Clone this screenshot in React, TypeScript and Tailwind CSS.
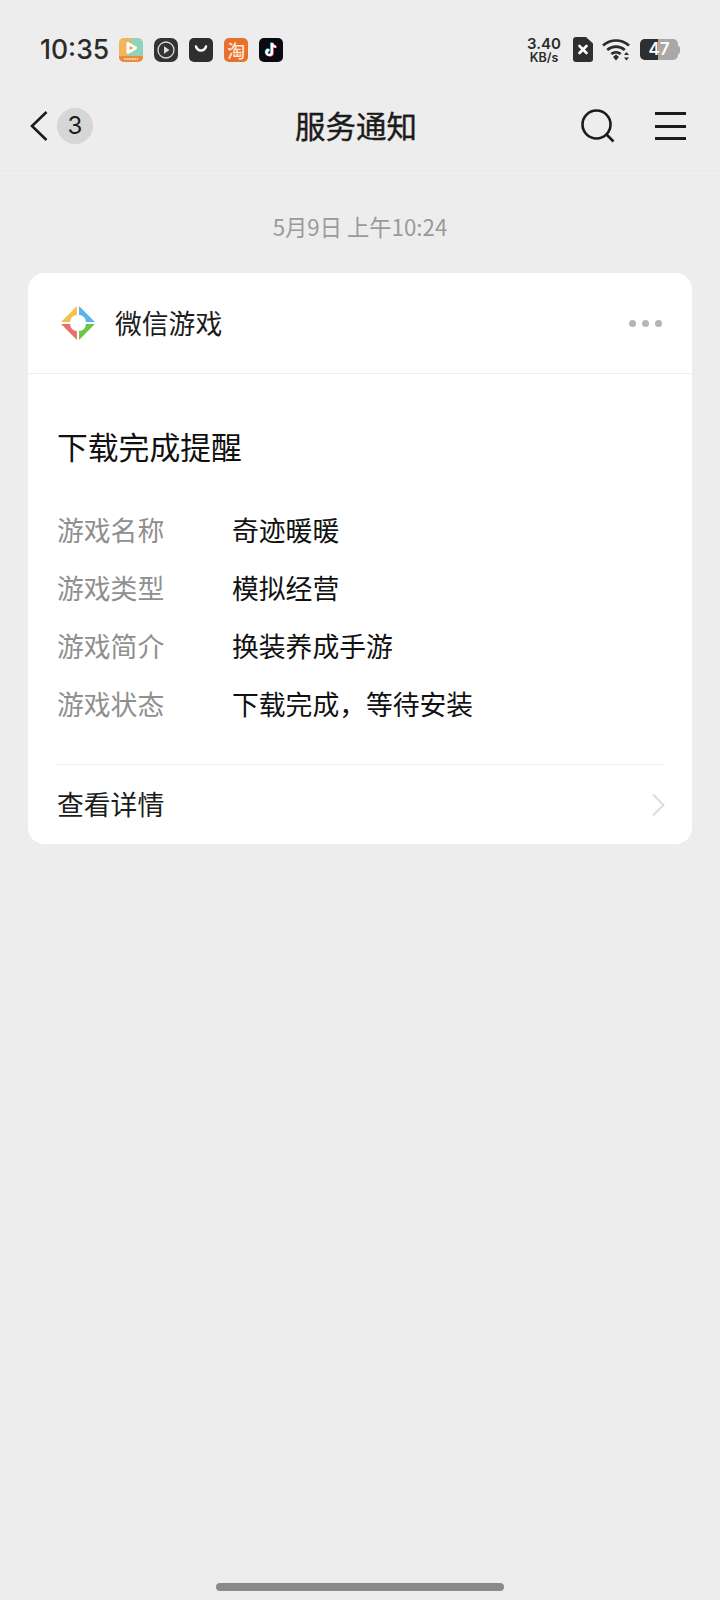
const cjk = "font-['Noto_Sans_CJK_SC','Noto_Sans',sans-serif]";

const rows = [
  ['游戏名称', '奇迹暖暖'],
  ['游戏类型', '模拟经营'],
  ['游戏简介', '换装养成手游'],
  ['游戏状态', '下载完成，等待安装'],
];

function AppIcons() {
  return (
    <div className="flex items-center gap-[11px]">
      <svg width="24" height="24" viewBox="0 0 24 24">
        <rect width="24" height="24" rx="5" fill="#8fd4b8" />
        <path d="M0 5a5 5 0 0 1 5-5h8L8 18H0z" fill="#f2b45c" />
        <path d="M0 18h24v1a5 5 0 0 1-5 5H5a5 5 0 0 1-5-5z" fill="#ee8a3c" />
        <path d="M7.500 5.500c0-1.200 1.200-1.900 2.300-1.200l7.500 4.500c1 .6 1 1.800 0 2.400l-7.500 4.500c-1.100.7-2.300 0-2.300-1.200z" fill="#fff" />
        <path d="M10.500 7.800l4.200 2.200-4.200 2.200z" fill="#f2a35c" />
        <path d="M5 21h14" stroke="#ffe2c4" strokeWidth="1.500" strokeDasharray="2 .6" />
      </svg>
      <svg width="24" height="24" viewBox="0 0 24 24">
        <rect width="24" height="24" rx="7" fill="#333" />
        <circle cx="12" cy="12" r="8" fill="none" stroke="#ddd" strokeWidth="1.300" />
        <path d="M10 8.300l5.500 3.700-5.500 3.700z" fill="#ddd" />
      </svg>
      <svg width="24" height="24" viewBox="0 0 24 24">
        <rect width="24" height="24" rx="5" fill="#2f2f2f" />
        <path d="M7 8.500c1 3 2.800 4 5 4s4-1 5-4" fill="none" stroke="#fff" strokeWidth="2.400" strokeLinecap="round" />
      </svg>
      <div className={`flex h-6 w-6 items-center justify-center rounded-[5px] bg-[#e96f2c] text-[18px] font-medium leading-none text-[#ffe9dc] ${cjk}`}>淘</div>
      <svg width="24" height="24" viewBox="0 0 24 24">
        <rect width="24" height="24" rx="5" fill="#0a0a12" />
        <path d="M13 5v9.500a2.700 2.700 0 1 1-2.700-2.700M13 5c.3 2.200 1.800 3.600 4 3.800" fill="none" stroke="#25d9e0" strokeWidth="2.200" transform="translate(-.8 -.4)" />
        <path d="M13 5v9.500a2.700 2.700 0 1 1-2.700-2.700M13 5c.3 2.200 1.800 3.600 4 3.800" fill="none" stroke="#f0305a" strokeWidth="2.200" transform="translate(.8 .4)" />
        <path d="M13 5v9.500a2.700 2.700 0 1 1-2.700-2.700M13 5c.3 2.200 1.800 3.600 4 3.800" fill="none" stroke="#fff" strokeWidth="2.200" />
      </svg>
    </div>
  );
}

function StatusBar() {
  return (
    <div className="flex h-[98px] items-center justify-between pt-[1px] pl-10 pr-[40px]">
      <div className="flex items-center gap-[10px]">
        <span className="font-['Inter',sans-serif] text-[26.500px] font-medium leading-none text-[#2b2b2b]">10:35</span>
        <AppIcons />
      </div>
      <div className="flex items-center">
        <div className="flex w-[36px] flex-col items-center gap-[1px] font-['Inter',sans-serif] font-semibold leading-none text-[#2b2b2b]">
          <span className="text-[15px] leading-[15px]">3.40</span>
          <span className="text-[12.500px] leading-[12px]">KB/s</span>
        </div>
        <svg className="ml-[11px]" width="20" height="25" viewBox="0 0 20 25">
          <path d="M3 0h10l7 6.500V22a3 3 0 0 1-3 3H3a3 3 0 0 1-3-3V3a3 3 0 0 1 3-3z" fill="#2f2f2f" />
          <path d="M6.500 9l7 7m0-7l-7 7" stroke="#fff" strokeWidth="2.600" strokeLinecap="round" />
        </svg>
        <svg className="ml-[9px]" width="29" height="23" viewBox="0 0 29 23">
          <g fill="none" stroke="#2b2b2b" strokeWidth="2.700">
            <path d="M1 7.500C8.500.800 19.500.800 27 7.500" />
            <path d="M5.200 12c5.300-4.500 12.300-4.500 17.600 0" />
            <path d="M9.300 16c2.800-2.300 6.600-2.300 9.400 0" />
          </g>
          <path d="M11 19l3-2.400 3 2.400-3 3.500z" fill="#2b2b2b" />
          <path d="M24.500 14l2.500 3h-5zM24.500 22.500l-2.500-3h5z" fill="#2b2b2b" />
        </svg>
        <div className="ml-[9px] flex items-center">
          <div className="relative flex h-[21px] w-[38px] items-center justify-center overflow-hidden rounded-[5px] bg-[#a8a8a8]">
            <div className="absolute inset-y-0 left-0 w-[18px] bg-[#2f2f2f]" />
            <span className="relative font-['Inter',sans-serif] text-[17px] font-semibold leading-none text-white">47</span>
          </div>
          <div className="h-[8px] w-[2px] rounded-r-[2px] bg-[#a8a8a8]" />
        </div>
      </div>
    </div>
  );
}

function NavBar() {
  return (
    <div className="relative flex h-[73px] items-center justify-between border-b border-[#e8e8e8] pb-[16px] pl-[29px] pr-[34px]">
      <div className="flex items-center gap-[8px]">
        <svg width="20" height="32" viewBox="0 0 20 32">
          <path d="M17.500 2L3 16l14.500 14" fill="none" stroke="#1c1c1c" strokeWidth="2.600" />
        </svg>
        <div className="flex h-9 w-9 items-center justify-center rounded-full bg-[#d6d6d6] font-['Inter',sans-serif] text-[24px] leading-none text-[#1c1c1c]">3</div>
      </div>
      <h1 className={`absolute left-[295px] top-[7px] text-[30.500px] leading-[40px] text-[#1c1c1c] [-webkit-text-stroke:0.4px_#1c1c1c] ${cjk}`}>服务通知</h1>
      <div className="flex items-center gap-[40px]">
        <svg width="34" height="34" viewBox="0 0 34 34">
          <circle cx="15.500" cy="15.500" r="14" fill="none" stroke="#1c1c1c" strokeWidth="2.600" />
          <path d="M25.500 25.500l7 7" stroke="#1c1c1c" strokeWidth="2.600" />
        </svg>
        <div className="flex h-[28px] w-[31px] flex-col justify-between">
          <div className="h-[3px] bg-[#1c1c1c]" />
          <div className="h-[3px] bg-[#1c1c1c]" />
          <div className="h-[3px] bg-[#1c1c1c]" />
        </div>
      </div>
    </div>
  );
}

function GameLogo() {
  return (
    <svg width="36" height="36" viewBox="0 0 34 34">
      <path d="M16 1v8.500A6.500 6.500 0 0 0 9.500 16H1z" fill="#f2c14e" />
      <path d="M18 1l15 15h-8.500A6.500 6.500 0 0 0 18 9.500z" fill="#5cb3ea" />
      <path d="M1 18h8.500A6.500 6.500 0 0 0 16 24.500V33z" fill="#e8706a" />
      <path d="M33 18L18 33v-8.500a6.500 6.500 0 0 0 6.500-6.500z" fill="#6cc748" />
    </svg>
  );
}

function Card() {
  return (
    <div className={`mx-[28px] mt-[29px] overflow-hidden rounded-[16px] bg-white ${cjk}`}>
      <div className="flex h-[101px] items-center justify-between border-b border-[#f0f0f0] pl-[32px] pr-[30px]">
        <div className="flex items-center gap-[19px]">
          <GameLogo />
          <span className="text-[26.800px] leading-none text-[#1c1c1c]">微信游戏</span>
        </div>
        <div className="mt-[1px] flex gap-[6px]">
          <div className="h-[7px] w-[7px] rounded-full bg-[#b5b5b5]" />
          <div className="h-[7px] w-[7px] rounded-full bg-[#b5b5b5]" />
          <div className="h-[7px] w-[7px] rounded-full bg-[#b5b5b5]" />
        </div>
      </div>
      <div className="px-[29px]">
        <div className="pt-[52px] text-[30.800px] leading-[40px] text-[#111]">下载完成提醒</div>
        <div className="mt-[44px] flex flex-col gap-[18px] border-b border-[#f0f0f0] pb-[40px]">
          {rows.map(([label, value]) => (
            <div key={label} className="flex text-[26.800px] leading-[40px]">
              <span className="w-[175px] text-[#8f8f8f]">{label}</span>
              <span className="text-[#111]">{value}</span>
            </div>
          ))}
        </div>
        <div className="flex h-[79px] items-center justify-between">
          <span className="text-[26.800px] leading-none text-[#1c1c1c]">查看详情</span>
          <svg className="mr-[-2px]" width="14" height="24" viewBox="0 0 14 24">
            <path d="M2 1.500L12.500 12 2 22.500" fill="none" stroke="#dcdcdc" strokeWidth="2" />
          </svg>
        </div>
      </div>
    </div>
  );
}

export default function App() {
  return (
    <div className="relative h-[1600px] w-[720px] overflow-hidden bg-[#ededed]">
      <StatusBar />
      <NavBar />
      <div className={`mt-[37px] text-center text-[22.300px] leading-[36px] text-[#9a9a9a] ${cjk}`}>5月9日 上午10:24</div>
      <Card />
      <div className="absolute bottom-[9px] left-[216px] h-[8px] w-[288px] rounded-full bg-[#8a8a8a]" />
    </div>
  );
}
